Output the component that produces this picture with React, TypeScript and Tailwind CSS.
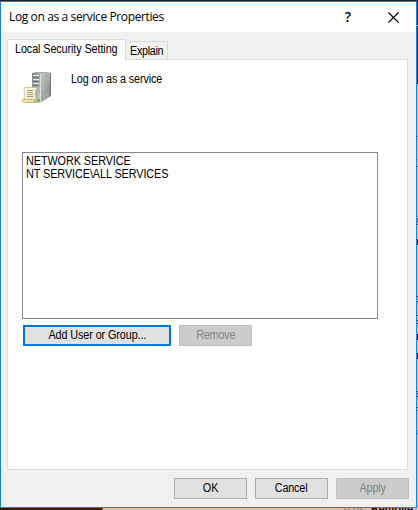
import React from "react";

const ui = "inline-block scale-x-90 font-['Liberation_Sans',Arial,sans-serif] text-[12px] leading-[13px] whitespace-nowrap";

function ServerIcon() {
  return (
    <svg width="32" height="32" viewBox="0 0 32 32" className="shrink-0">
      <defs>
        <linearGradient id="front" x1="0" y1="0" x2="1" y2="1">
          <stop offset="0" stopColor="#7d8484" />
          <stop offset="1" stopColor="#c9cecd" />
        </linearGradient>
        <linearGradient id="side" x1="0" y1="0" x2="1" y2="1">
          <stop offset="0" stopColor="#c6caca" />
          <stop offset="0.5" stopColor="#a4aaaa" />
          <stop offset="1" stopColor="#737979" />
        </linearGradient>
        <linearGradient id="paper" x1="0" y1="0" x2="1" y2="1">
          <stop offset="0" stopColor="#fffbe4" />
          <stop offset="1" stopColor="#f3e4b4" />
        </linearGradient>
      </defs>
      <path d="M10 1 L13 0 H29 L19 2 Z" fill="#a9adad" />
      <path d="M10 1 H18 V31 H10 Z" fill="url(#front)" />
      <path d="M18 1.5 L29 0.5 V24 L18 31 Z" fill="url(#side)" />
      <path d="M28.5 1 V24" stroke="#757b7b" />
      <path d="M18.5 2 V30" stroke="#dde0df" />
      <path d="M11 3.5 H17 M11 7.5 H17 M11 11.5 H17" stroke="#e2e5e5" />
      <path d="M11 5.5 H17 M11 9.5 H17 M11 13.5 H17" stroke="#697272" />
      <path d="M22 24 L27 20 M22 26 L27 22 M22 28 L27 24" stroke="#d5d8d8" strokeWidth="0.8" strokeDasharray="1 1" />
      <path d="M3 15.5 H14 Q15 16 14.5 18 H13.5 V28 H2 Q3 23 2 17 Z" fill="url(#paper)" stroke="#d0ba84" strokeWidth="0.8" />
      <path d="M0.5 27.5 H11 L12.5 30.5 H1.5 Q0 30 0.5 27.5 Z" fill="#f2e4b5" stroke="#c3aa70" strokeWidth="0.8" />
      <path d="M5 18.5 H11 M5 20.5 H11 M5 22.5 H11 M5 24.5 H11" stroke="#a39a91" />
      <rect x="15" y="27" width="3" height="3" fill="#53d313" />
    </svg>
  );
}

function Button({ label, box, text }: { label: string; box: string; text: string }) {
  return (
    <button className={`flex h-[21px] items-center justify-center ${box}`}>
      <span className={`${ui} ${text}`}>{label}</span>
    </button>
  );
}

const normal = "w-[73px] border border-[#adadad] bg-[#e1e1e1] text-black";
const disabled = "w-[73px] border border-[#bfbfbf] bg-[#cccccc] text-[#838383]";

const edgeMarks = [
  { gap: "mt-[52px]", color: "bg-[#517b9d]" },
  { gap: "mt-[22px]", color: "bg-[#7ba6c4]" },
  { gap: "mt-[6px]", color: "bg-[#3c698f]" },
  { gap: "mt-[52px]", color: "bg-[#10131a]" },
  { gap: "mt-[1px]", color: "bg-[#10131a]" },
  { gap: "mt-[2px]", color: "bg-[#10131a]" },
  { gap: "mt-[14px]", color: "bg-[#3b0824] h-[6px]" },
  { gap: "mt-[51px]", color: "bg-[#10131a]" },
  { gap: "mt-[4px]", color: "bg-[#10131a]" },
  { gap: "mt-[13px]", color: "bg-[#10131a]" },
  { gap: "mt-[4px]", color: "bg-[#10131a]" },
  { gap: "mt-[2px]", color: "bg-[#10131a]" },
  { gap: "mt-[10px]", color: "bg-[#29152f] h-[6px]" },
  { gap: "mt-[13px]", color: "bg-[#29152f] h-[6px]" },
  { gap: "mt-[32px]", color: "bg-[#10131a]" },
  { gap: "mt-[1px]", color: "bg-[#10131a]" },
  { gap: "mt-[2px]", color: "bg-[#10131a]" },
  { gap: "mt-[10px]", color: "bg-[#10131a]" },
  { gap: "mt-[2px]", color: "bg-[#6389a1]" },
  { gap: "mt-[19px]", color: "bg-[#4f9bd2] h-[5px]" },
];

export default function App() {
  return (
    <div className="flex h-[510px] w-[418px] flex-col overflow-hidden bg-[#202020]">
      <div className="mt-px flex h-[507px]">
        <div className="flex w-[417px] flex-col border border-[#1883d7] bg-[#f0f0f0]">
          <div className="flex h-[30px] shrink-0 items-center bg-white pl-2">
            <span className="w-[335px] shrink-0 whitespace-nowrap font-['Open_Sans','Noto_Sans',sans-serif] text-[12px] leading-4 tracking-[-0.38px] text-black">
              Log on as a service Properties
            </span>
            <span className="w-[8px] shrink-0 text-center font-['Open_Sans',sans-serif] text-[14px] font-semibold leading-4 text-black">
              ?
            </span>
            <svg width="11" height="11" viewBox="0 0 11 11" className="ml-[36px] shrink-0">
              <path d="M.5 .5 L10.5 10.5 M10.5 .5 L.5 10.5" stroke="#000" strokeWidth="1.1" />
            </svg>
          </div>
          <div className="ml-[6px] mt-[7px] flex h-[21px] items-end">
            <div className="z-10 flex h-[21px] w-[119px] border border-b-0 border-[#dcdcdc] bg-white pl-[7px] pt-[3px]">
              <span className={`${ui} origin-left tracking-[-0.1px]`}>Local Security Setting</span>
            </div>
            <div className="mb-px flex h-[18px] w-[42px] border border-b-0 border-l-0 border-[#d9d9d9] bg-[#f0f0f0] pl-[4px] pt-[3px]">
              <span className={`${ui} origin-left tracking-[-0.35px]`}>Explain</span>
            </div>
          </div>
          <div className="-mt-px ml-[6px] flex h-[411px] w-[401px] flex-col border border-[#dcdcdc] bg-white">
            <div className="ml-[14px] mt-[12px] flex h-[31px]">
              <ServerIcon />
              <span className={`${ui} ml-[17px] mt-px origin-left self-start tracking-[-0.15px]`}>Log on as a service</span>
            </div>
            <div className="ml-[14px] mt-[49px] h-[167px] w-[356px] border border-[#828790] bg-white pl-[3px] pt-[2px]">
              <p className="flex"><span className={`${ui} origin-left tracking-[-0.05px]`}>NETWORK SERVICE</span></p>
              <p className="flex"><span className={`${ui} origin-left tracking-[-0.06px]`}>NT SERVICE\ALL SERVICES</span></p>
            </div>
            <div className="ml-[15px] mt-[6px] flex gap-[8px]">
              <Button label="Add User or Group..." box="w-[148px] border-2 border-[#0078d7] bg-[#e1e1e1] text-black" text="tracking-[-0.1px]" />
              <Button label="Remove" box={disabled} text="tracking-[-0.2px]" />
            </div>
          </div>
          <div className="ml-[173px] mt-[8px] flex gap-[8px]">
            <Button label="OK" box={normal} text="tracking-[-0.1px]" />
            <Button label="Cancel" box={normal} text="tracking-[-0.2px]" />
            <Button label="Apply" box={disabled} text="tracking-[-0.15px]" />
          </div>
        </div>
        <div className="flex w-px flex-col">
          <div className="h-[83px] shrink-0 bg-[#202c38] pt-[24px]">
            <div className="h-px bg-white" />
          </div>
          <div className="flex h-[424px] flex-col bg-[#9ccfef]">
            {edgeMarks.map((m, i) => (
              <div key={i} className={`min-h-px w-px shrink-0 ${m.gap} ${m.color}`} />
            ))}
          </div>
        </div>
      </div>
      <div className="flex h-[2px] overflow-hidden">
        <div className="w-[102px] bg-[#202020]" />
        <div className="w-px bg-[#6b6b6b]" />
        <div className="flex flex-1 items-start bg-[#c8c8c8] pl-[241px]">
          <span className={`${ui} -mt-[5px] w-[27px] shrink-0 origin-left text-[#777777]`}>n ps:</span>
          <span className={`${ui} -mt-[5px] origin-left font-bold text-black`}>Remove</span>
        </div>
      </div>
    </div>
  );
}
